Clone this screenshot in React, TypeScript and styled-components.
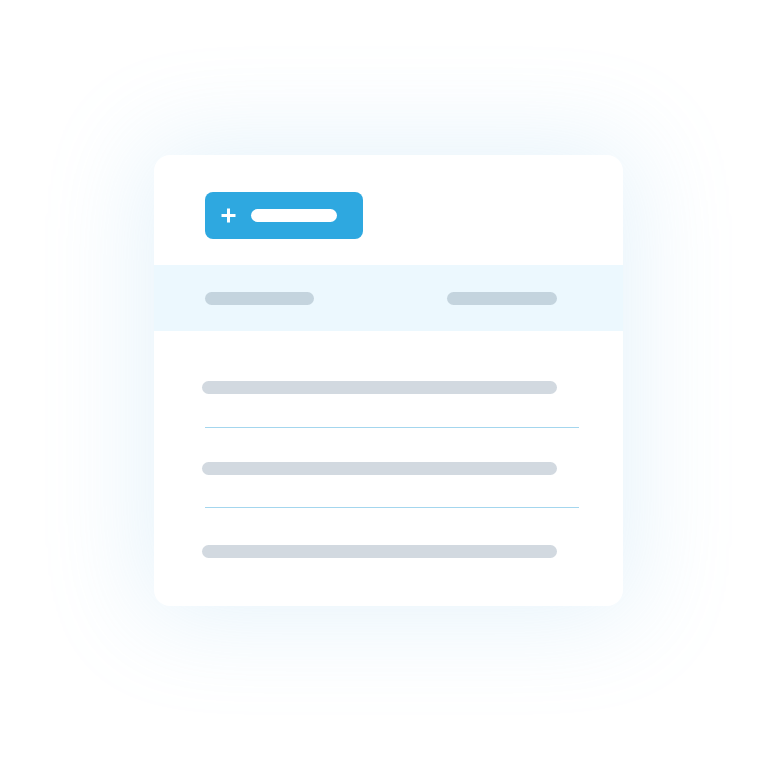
import React from "react";
import styled, { createGlobalStyle } from "styled-components";

const Global = createGlobalStyle`
  html, body { margin: 0; padding: 0; background: #ffffff; }
  body { font-family: "Liberation Sans", Arial, sans-serif; }
`;

const Page = styled.div`
  width: 777px;
  height: 761px;
  display: flex;
  align-items: center;
  justify-content: center;
  background: #ffffff;
`;

const Card = styled.div`
  width: 469px;
  height: 451px;
  background: #ffffff;
  border-radius: 16px;
  box-shadow: 0 0 100px 12px rgba(130, 195, 235, 0.2);
  display: flex;
  flex-direction: column;
  overflow: hidden;
`;

const Toolbar = styled.div`
  height: 110px;
  box-sizing: border-box;
  padding: 37px 0 0 51px;
  display: flex;
  align-items: flex-start;
`;

const AddButton = styled.div`
  width: 158px;
  height: 47px;
  box-sizing: border-box;
  border-radius: 8px;
  background: #2ea8e0;
  display: flex;
  align-items: center;
  padding-left: 15px;
  gap: 14px;
`;

const Label = styled.div`
  width: 86px;
  height: 13px;
  border-radius: 7px;
  background: #ffffff;
`;

const HeaderBand = styled.div`
  height: 66px;
  background: #ecf8fe;
  display: flex;
  align-items: center;
  padding-left: 51px;
  gap: 133px;
`;

const Bar = styled.div<{ $w: number; $tone: "head" | "body"; $mt?: number }>`
  width: ${(p) => p.$w}px;
  height: 13px;
  border-radius: 7px;
  background: ${(p) => (p.$tone === "head" ? "#c4d4de" : "#d2d9e0")};
  margin-top: ${(p) => p.$mt ?? 0}px;
  flex-shrink: 0;
`;

const List = styled.div`
  flex: 1;
  display: flex;
  flex-direction: column;
  padding: 50px 0 0 48px;
`;

const Divider = styled.div<{ $mt: number }>`
  width: 374px;
  height: 1px;
  margin-left: 3px;
  margin-top: ${(p) => p.$mt}px;
  background: #a4d6ee;
`;

const PlusIcon = () => (
  <svg width="17" height="17" viewBox="0 0 17 17">
    <path d="M8.5 1.5v14M1.5 8.5h14" stroke="#fff" strokeWidth="3" />
  </svg>
);

export default function App() {
  return (
    <>
      <Global />
      <Page>
        <Card>
          <Toolbar>
            <AddButton>
              <PlusIcon />
              <Label />
            </AddButton>
          </Toolbar>
          <HeaderBand>
            <Bar $w={109} $tone="head" />
            <Bar $w={110} $tone="head" />
          </HeaderBand>
          <List>
            <Bar $w={355} $tone="body" />
            <Divider $mt={33} />
            <Bar $w={355} $tone="body" $mt={34} />
            <Divider $mt={32} />
            <Bar $w={355} $tone="body" $mt={37} />
          </List>
        </Card>
      </Page>
    </>
  );
}
